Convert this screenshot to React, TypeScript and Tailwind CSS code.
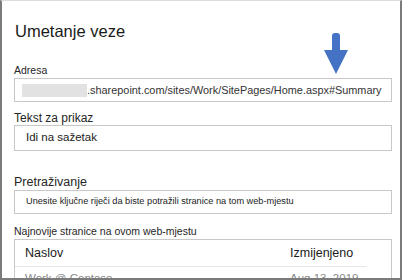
import React from 'react';

const font = { fontFamily: '"Liberation Sans", Arial, sans-serif' };

const Label = ({ children, className }: { children: React.ReactNode; className: string }) => (
  <div className={`flex items-center text-[#262626] ${className}`}>{children}</div>
);

const App = () => {
  return (
    <div
      className="relative w-[402px] h-[280px] overflow-hidden bg-white border-x-2 border-b-2 border-[#7b7b7b] border-t border-t-[#dcdcdc]"
      style={font}
    >
      {/* annotation arrow */}
      <svg className="absolute left-[321px] top-[31px]" width="26" height="43" viewBox="0 0 26 43">
        <rect x="9" y="1" width="8" height="20" rx="3" fill="#4472c4" />
        <polygon points="1,18 25,18 13,42" fill="#4472c4" />
      </svg>

      <div className="flex flex-col pl-3 pr-2">
        <div className="mt-[17px] h-[26px] flex items-center pl-px text-[16.5px] font-light text-[#1a1a1a]">
          Umetanje veze
        </div>

        <Label className="mt-[20px] h-[14px] text-[10.5px]">Adresa</Label>
        <div className="h-[24px] border border-[#c8c8c8] flex items-center pl-[7px] text-[10.9px] text-[#333]">
          <span className="w-[65px] h-[13px] shrink-0 bg-[#e2e2e2]" />
          <span>.sharepoint.com/sites/Work/SitePages/Home.aspx#Summary</span>
        </div>

        <Label className="mt-[8px] h-[15px] text-[12px]">Tekst za prikaz</Label>
        <div className="h-[26px] border border-[#c8c8c8] flex items-center pl-[11px] text-[11.5px] text-[#222]">
          Idi na sažetak
        </div>

        <Label className="mt-[23px] h-[16px] text-[12.5px]">Pretraživanje</Label>
        <div className="h-[24px] border border-[#c8c8c8] flex items-center pl-[11px] text-[9.2px] text-[#222]">
          Unesite ključne riječi da biste potražili stranice na tom web-mjestu
        </div>

        <Label className="mt-[10px] h-[15px] text-[10.5px]">Najnovije stranice na ovom web-mjestu</Label>
        <div className="border border-[#c8c8c8] h-[60px]">
          <div className="h-[27px] flex items-center text-[12.5px] text-[#1a1a1a] border-b border-[#e6e6e6] mr-[24px]">
            <span className="pl-[10px] w-[275px]">Naslov</span>
            <span>Izmijenjeno</span>
          </div>
          <div className="h-[24px] flex items-center text-[11.5px] text-[#8a8a8a] mr-[24px]">
            <span className="pl-[10px] w-[275px]">Work @ Contoso</span>
            <span>Aug 13, 2019</span>
          </div>
        </div>
      </div>
    </div>
  );
};

export default App;
